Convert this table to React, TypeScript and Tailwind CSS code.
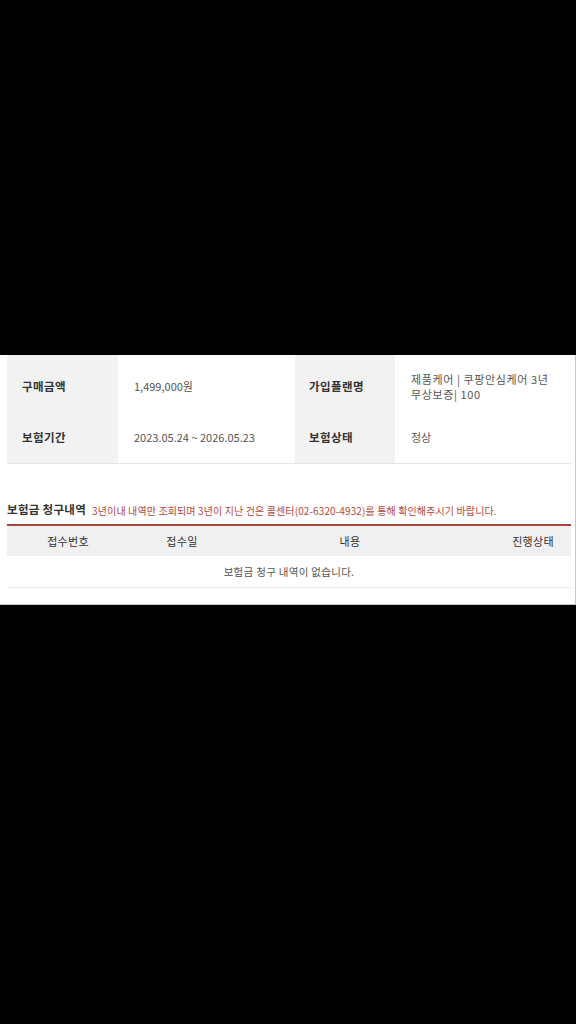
import React from "react";

export default function App() {
  const font = { fontFamily: '"Noto Sans CJK KR", "Noto Sans", sans-serif' };
  return (
    <div className="w-[576px] h-[1024px] bg-black flex flex-col" style={font}>
      <div className="h-[355px] shrink-0" />
      <div className="bg-white h-[250px] shrink-0 border-r border-b border-[#c8c8c8] flex flex-col">
        <div className="mx-[7px] w-[564px] border-b border-[#e6e6e6]">
          <div className="flex h-[57px] pt-[6px]">
            <div className="w-[111px] bg-[#f2f2f2] flex items-center pl-[15px] -mt-[6px] pt-[6px] text-[11.5px] tracking-[0.4px] font-bold text-[#333]">구매금액</div>
            <div className="w-[177px] flex items-center pl-[16px] text-[11px] text-[#555]">1,499,000원</div>
            <div className="w-[100px] bg-[#f2f2f2] flex items-center pl-[14px] -mt-[6px] pt-[6px] text-[11.5px] tracking-[0.4px] font-bold text-[#333]">가입플랜명</div>
            <div className="flex-1 flex items-center pl-[16px] text-[11px] leading-[15px] tracking-[0.6px] text-[#555]">제품케어 | 쿠팡안심케어 3년<br />무상보증| 100</div>
          </div>
          <div className="flex h-[51px]">
            <div className="w-[111px] bg-[#f2f2f2] flex items-center pl-[15px] text-[11.5px] tracking-[0.4px] font-bold text-[#333]">보험기간</div>
            <div className="w-[177px] flex items-center pl-[16px] text-[11px] text-[#555]">2023.05.24 ~ 2026.05.23</div>
            <div className="w-[100px] bg-[#f2f2f2] flex items-center pl-[14px] text-[11.5px] tracking-[0.4px] font-bold text-[#333]">보험상태</div>
            <div className="flex-1 flex items-center pl-[16px] text-[11px] text-[#555]">정상</div>
          </div>
        </div>
        <div className="mx-[7px] w-[564px] mt-[38px] flex items-center h-[16px]">
          <span className="text-[11.5px] font-bold text-[#333] whitespace-nowrap tracking-[0.3px]">보험금 청구내역</span>
          <span className="ml-[6px] text-[10px] text-[#b8463c] whitespace-nowrap tracking-[0.12px]">3년이내 내역만 조회되며 3년이 지난 건은 콜센터(02-6320-4932)를 통해 확인해주시기 바랍니다.</span>
        </div>
        <div className="mx-[7px] w-[564px] mt-[6px] border-t-2 border-[#a8453b]">
          <div className="grid grid-cols-[122px_106px_230px_106px] h-[30px] bg-[#f0f0f0] items-center text-[11px] tracking-[0.3px] text-[#333]">
            <div className="text-center">접수번호</div>
            <div className="text-center">접수일</div>
            <div className="text-center">내용</div>
            <div className="text-center pl-[30px]">진행상태</div>
          </div>
          <div className="h-[32px] flex items-center justify-center text-[10.5px] tracking-[0.3px] text-[#555] border-b border-[#e8e8e8]">
            보험금 청구 내역이 없습니다.
          </div>
        </div>
      </div>
    </div>
  );
}
